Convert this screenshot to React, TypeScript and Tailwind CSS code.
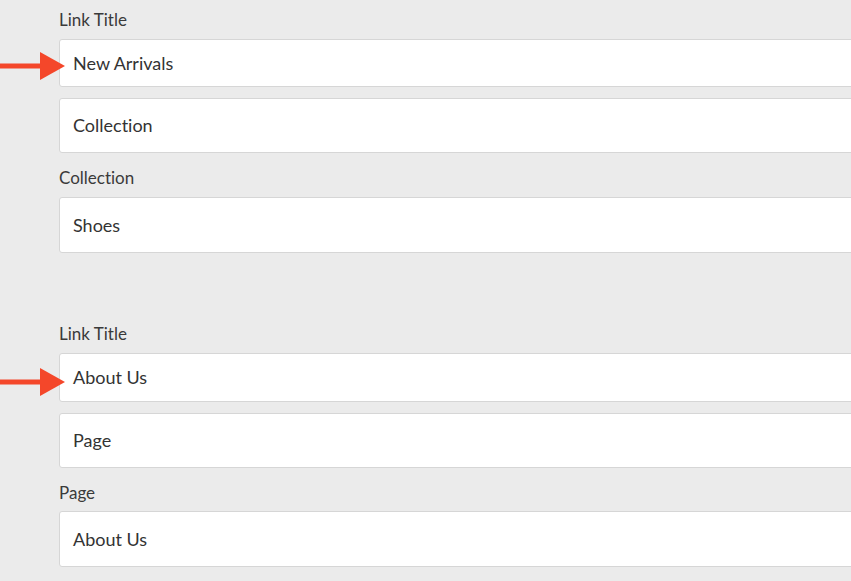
import React from 'react';

function Arrow({ top }: { top: number }) {
  return (
    <svg
      className="absolute left-0"
      style={{ top }}
      width="66"
      height="28"
      viewBox="0 0 66 28"
    >
      <rect x="0" y="11.5" width="42" height="5" fill="#f4472a" />
      <polygon points="40,0 65,14 40,28" fill="#f4472a" />
    </svg>
  );
}

function Field({ value, h, className }: { value: string; h: string; className?: string }) {
  return (
    <div
      className={`w-[900px] bg-white border border-[#d6d6d6] rounded-[3px] flex items-center pl-[13px] text-[18px] text-[#333333] ${h} ${className ?? ''}`}
    >
      {value}
    </div>
  );
}

function Label({ text, className }: { text: string; className?: string }) {
  return (
    <div className={`text-[17px] leading-[20px] text-[#3a3a3a] ${className ?? ''}`}>{text}</div>
  );
}

export default function App() {
  return (
    <div
      className="relative w-[851px] h-[581px] overflow-hidden bg-[#ebebeb] pl-[59px] pt-[10px] [font-variant-ligatures:none]"
      style={{ fontFamily: 'Lato, "Open Sans", sans-serif' }}
    >
      <Arrow top={52} />
      <Arrow top={368} />
      <div className="flex flex-col">
        <Label text="Link Title" className="mb-[9px]" />
        <Field value="New Arrivals" h="h-[48px]" />
        <Field value="Collection" h="h-[55px]" className="mt-[11px]" />
        <Label text="Collection" className="mt-[15px] mb-[9px]" />
        <Field value="Shoes" h="h-[56px]" />

        <Label text="Link Title" className="mt-[71px] mb-[9px]" />
        <Field value="About Us" h="h-[49px]" />
        <Field value="Page" h="h-[55px]" className="mt-[11px]" />
        <Label text="Page" className="mt-[15px] mb-[8px]" />
        <Field value="About Us" h="h-[56px]" />
      </div>
    </div>
  );
}
